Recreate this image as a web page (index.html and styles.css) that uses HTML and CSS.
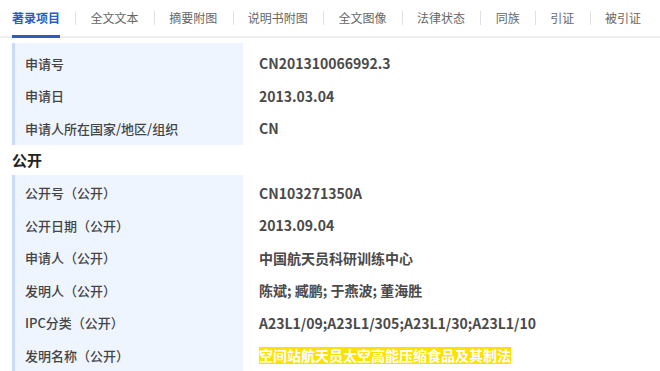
FILE: index.html
```html
<!DOCTYPE html>
<html lang="zh-CN">
<head>
  <meta charset="UTF-8">
  <title>著录项目</title>
  <link rel="stylesheet" href="styles.css">
</head>
<body>

  <!-- Tabs -->
  <div class="tabs">
    <span class="tab active">著录项目</span>
    <span class="tab">全文文本</span>
    <span class="tab">摘要附图</span>
    <span class="tab">说明书附图</span>
    <span class="tab">全文图像</span>
    <span class="tab">法律状态</span>
    <span class="tab">同族</span>
    <span class="tab">引证</span>
    <span class="tab">被引证</span>
  </div>

  <div class="content">
    <div class="block first">
      <div class="row"><div class="label">申请号</div><div class="value">CN201310066992.3</div></div>
      <div class="row"><div class="label">申请日</div><div class="value">2013.03.04</div></div>
      <div class="row"><div class="label">申请人所在国家/地区/组织</div><div class="value">CN</div></div>
    </div>

    <h3 class="section">公开</h3>

    <div class="block">
      <div class="row"><div class="label">公开号（公开）</div><div class="value">CN103271350A</div></div>
      <div class="row"><div class="label">公开日期（公开）</div><div class="value">2013.09.04</div></div>
      <div class="row"><div class="label">申请人（公开）</div><div class="value">中国航天员科研训练中心</div></div>
      <div class="row"><div class="label">发明人（公开）</div><div class="value">陈斌; 臧鹏; 于燕波; 董海胜</div></div>
      <div class="row"><div class="label">IPC分类（公开）</div><div class="value">A23L1/09;A23L1/305;A23L1/30;A23L1/10</div></div>
      <div class="row"><div class="label">发明名称（公开）</div><div class="value"><span class="mark">空间站航天员太空高能压缩食品及其制法</span></div></div>
    </div>
  </div>

</body>
</html>
```

FILE: styles.css
```css
body {
  margin: 0;
  font-family: "Noto Sans CJK SC", "Noto Sans", sans-serif;
  background-color: #fff;
  color: #333;
}
.tabs {
  display: flex;
  align-items: center;
  height: 36px;
  padding-left: 12px;
  border-bottom: 2px solid #eceef2;
}
.tab {
  position: relative;
  flex: none;
  white-space: nowrap;
  font-size: 12px;
  color: #666;
  height: 36px;
  line-height: 36px;
  padding: 0 15.3px;
}
.tab:first-child {
  padding-left: 0;
}
.tab + .tab::before {
  content: "";
  position: absolute;
  left: 0;
  top: 11px;
  height: 14px;
  border-left: 1px solid #e2e2e2;
}
.tab.active {
  color: #2a5cc2;
  font-weight: bold;
}
.tab.active::after {
  content: "";
  position: absolute;
  left: 0;
  right: 15.3px;
  bottom: -2px;
  height: 3px;
  background-color: #2a5cc2;
}
.content {
  padding: 5px 12px 0;
}
.block {
  padding-top: 2px;
}
.block.first {
  padding-top: 4px;
}
.row {
  display: flex;
  height: 32.5px;
  align-items: center;
}
.label {
  width: 231px;
  box-sizing: border-box;
  flex: none;
  align-self: stretch;
  display: flex;
  align-items: center;
  padding-left: 10px;
  background-color: #eef5fe;
  border-left: 3px solid #c9dbf6;
  font-size: 13px;
  font-weight: 500;
  color: #444;
}
.block .row:first-child .label {
  margin-top: -4px;
  padding-top: 4px;
}
.block:not(.first) .row:first-child .label {
  margin-top: -2px;
  padding-top: 2px;
}
.value {
  padding-left: 16px;
  font-size: 14px;
  font-weight: bold;
  color: #4a4a4a;
}
.mark {
  background-color: #ffe100;
  color: #fff;
  line-height: 17px;
  display: inline-block;
}
.section {
  margin: 0;
  height: 30px;
  line-height: 30px;
  font-size: 15px;
  font-weight: bold;
  color: #222;
}
```
